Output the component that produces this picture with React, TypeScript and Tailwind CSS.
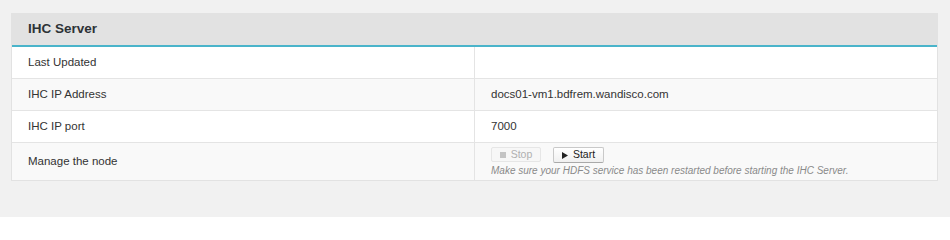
import React from "react";

const font = { fontFamily: '"Liberation Sans", Arial, sans-serif' };

function Row({ label, children, alt, last, tall }: { label: string; children?: React.ReactNode; alt?: boolean; last?: boolean; tall?: boolean }) {
  return (
    <div className={`flex ${tall ? "h-[37px]" : "h-[32px]"} ${alt ? "bg-[#f9f9f9]" : "bg-white"} ${last ? "" : "border-b border-[#e4e4e4]"}`}>
      <div className="w-[463px] shrink-0 border-r border-[#e4e4e4] pl-4 flex items-center text-[11.5px] text-[#333]">
        {label}
      </div>
      <div className="flex-1 pl-[16px] flex items-center text-[11.5px] text-[#333]">{children}</div>
    </div>
  );
}

export default function App() {
  return (
    <div className="w-[950px] h-[217px] bg-[#f1f1f1] pt-[13px] pl-[11px]" style={font}>
      <div className="w-[927px] border border-[#e2e2e2] border-t-0">
        <div className="h-[34px] bg-[#e2e2e2] flex items-center pl-4 border-b-2 border-[#4ab4ca]">
          <span className="text-[13.5px] font-bold text-[#2d3236]">IHC Server</span>
        </div>
        <Row label="Last Updated" />
        <Row label="IHC IP Address" alt>
          docs01-vm1.bdfrem.wandisco.com
        </Row>
        <Row label="IHC IP port">7000</Row>
        <Row label="Manage the node" alt last tall>
          <div className="flex flex-col pt-[1px]">
            <div className="flex gap-[12px]">
              <button className="h-[15px] w-[50px] flex items-center justify-center gap-[5px] bg-[#f7f7f7] border border-[#e6e6e6] rounded-[2px] text-[10.5px] text-[#b0b0b0]">
                <span className="inline-block w-[6px] h-[6px] bg-[#c4c4c4]" />
                Stop
              </button>
              <button className="h-[16px] w-[51px] flex items-center justify-center gap-[5px] bg-gradient-to-b from-white to-[#f0f0f0] border border-[#c9c9c9] border-b-[#a9a9a9] rounded-[2px] text-[10.5px] text-[#222]">
                <svg width="6" height="7" viewBox="0 0 6 7"><path d="M0 0 L6 3.5 L0 7 Z" fill="#222" /></svg>
                Start
              </button>
            </div>
            <div className="text-[10px] italic text-[#8a8a8a] leading-[12px] mt-[2px]">
              Make sure your HDFS service has been restarted before starting the IHC Server.
            </div>
          </div>
        </Row>
      </div>
    </div>
  );
}
